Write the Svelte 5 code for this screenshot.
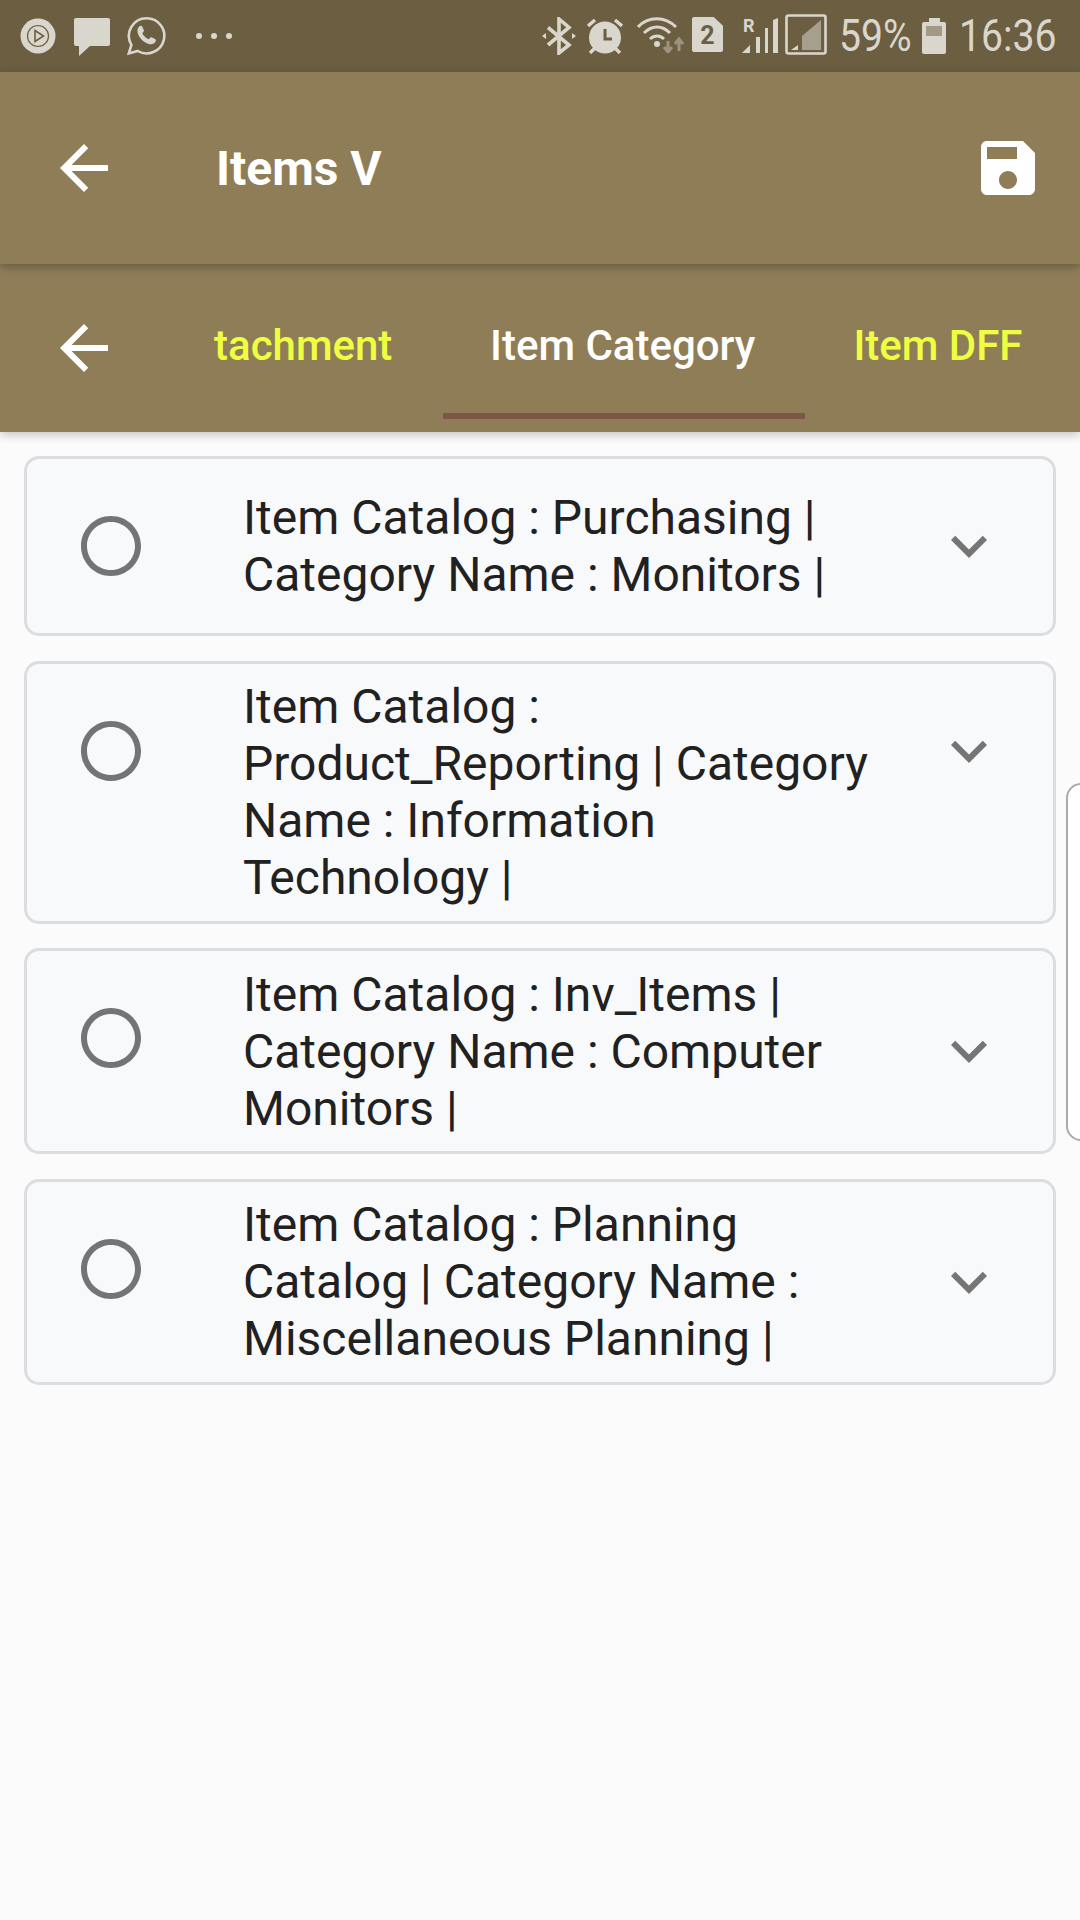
<script>
  const items = [
    { text: 'Item Catalog : Purchasing | Category Name : Monitors |', chevTop: true },
    { text: 'Item Catalog : Product_Reporting | Category Name : Information Technology |', chevTop: true },
    { text: 'Item Catalog : Inv_Items | Category Name : Computer Monitors |', chevTop: false },
    { text: 'Item Catalog : Planning Catalog | Category Name : Miscellaneous Planning |', chevTop: false }
  ];
  const backPath = 'M20 11H7.83l5.59-5.59L12 4l-8 8 8 8 1.41-1.41L7.83 13H20v-2z';
</script>

<div class="page">
  <div class="status">
    <svg class="s-play" viewBox="0 0 36 36" width="36" height="36">
      <circle cx="18" cy="18" r="17.5" fill="#d9d6ce" />
      <circle cx="18" cy="18" r="10.5" fill="none" stroke="#6c5e40" stroke-width="1.2" />
      <path d="M15 12.5 L23.5 18 L15 23.5 Z" fill="#d9d6ce" stroke="#6c5e40" stroke-width="1.6" />
    </svg>
    <svg class="s-chat" viewBox="0 0 36 38" width="36" height="38">
      <path d="M2 0H34a2 2 0 0 1 2 2V26a2 2 0 0 1-2 2H16L5 38V28H2a2 2 0 0 1-2-2V2a2 2 0 0 1 2-2Z" fill="#d9d6ce" />
    </svg>
    <svg class="s-wa" viewBox="0 0 40 40" width="40" height="40">
      <path d="M20.5 2.2A17.6 17.6 0 0 0 5.4 28.8L2.8 37.4l9-2.4A17.6 17.6 0 1 0 20.5 2.2Z" fill="none" stroke="#d9d6ce" stroke-width="2.6" />
      <path d="M13.8 10.2c1 -.6 2 -.4 2.5 .6l1.5 3.2c.3 .7 .1 1.3 -.4 1.9l-1.1 1.3c1.2 2.6 3.6 4.9 6.4 6.1l1.5 -1.5c.5 -.5 1.2 -.6 1.8 -.3l3.1 1.6c.8 .5 1 1.3 .6 2.2c-1 2.3 -3.4 3.5 -6 2.9c-6.1 -1.4 -11 -6.3 -12.2 -12.2c-.4 -2.1 .4 -4.4 1.9 -5.8Z" fill="#d9d6ce" />
    </svg>
    <div class="dots"><i></i><i></i><i></i></div>

    <div class="spacer"></div>

    <svg class="s-bt" viewBox="0 0 34 38" width="34" height="38">
      <path d="M6 10.5 L27 28 L17 36 V2 L27 10.5 L6 28" fill="none" stroke="#d9d6ce" stroke-width="3.6" />
      <path d="M0 19l4-3v6zM34 19l-4-3v6z" fill="#d9d6ce" />
    </svg>
    <svg class="s-alarm" viewBox="0 0 36 36" width="36" height="36">
      <circle cx="18" cy="19.5" r="16" fill="#d9d6ce" />
      <path d="M18 11V21H25" fill="none" stroke="#6c5e40" stroke-width="3" />
      <path d="M1 8 L8 2M35 8 L28 2M3 35 L8 30M33 35 L28 30" stroke="#d9d6ce" stroke-width="3.4" />
    </svg>
    <svg class="s-wifi" viewBox="0 0 49 36" width="49" height="36">
      <path d="M1 10C11 -1 28 -1 39 10M7 16C15 8 25 8 33 16M13 22C17 18 23 18 27 22" fill="none" stroke="#d9d6ce" stroke-width="3" />
      <circle cx="20" cy="27" r="3" fill="#d9d6ce" />
      <path d="M31 24V34M27 30l4 5 4-5M42 34V22M38 27l4-5 4 5" fill="none" stroke="#d9d6ce" stroke-opacity=".45" stroke-width="3" />
    </svg>
    <div class="sim"><span>2</span></div>
    <svg class="s-sig" viewBox="0 0 36 35" width="36" height="35">
      <path d="M0 35L8 27V35ZM14 35V19H18V35ZM23 35V10H26V35ZM31 35V2L36 0V35Z" fill="#d9d6ce" />
    </svg>
    <span class="r">R</span>
    <svg class="s-box" viewBox="0 0 42 41" width="42" height="41">
      <rect x="1.5" y="1.5" width="39" height="38" rx="2" fill="none" stroke="#d9d6ce" stroke-width="2.6" />
      <path d="M17 36V22L36 6V36Z" fill="#d9d6ce" fill-opacity=".55" />
      <path d="M6 36L13 31V36Z" fill="#d9d6ce" />
    </svg>
    <div class="clock pct">59%</div>
    <svg class="s-bat" viewBox="0 0 24 36" width="24" height="36">
      <path d="M7 0H18V4H22a2 2 0 0 1 2 2V34a2 2 0 0 1-2 2H2a2 2 0 0 1-2-2V6a2 2 0 0 1 2-2H7Z" fill="#d9d6ce" />
      <rect x="4" y="8" width="16" height="10" fill="#6c5e40" fill-opacity=".5" />
    </svg>
    <div class="clock time">16:36</div>
  </div>

  <header class="appbar">
    <svg class="icon back" viewBox="0 0 24 24"><path d={backPath} /></svg>
    <h1>Items V</h1>
    <svg class="icon save" viewBox="0 0 24 24">
      <path d="M17 3H5c-1.11 0-2 .9-2 2v14c0 1.1.89 2 2 2h14c1.1 0 2-.9 2-2V7l-4-4zm-5 16c-1.66 0-3-1.34-3-3s1.34-3 3-3 3 1.34 3 3-1.34 3-3 3zm3-10H5V5h10v4z" />
    </svg>
  </header>

  <nav class="tabs">
    <svg class="icon back" viewBox="0 0 24 24"><path d={backPath} /></svg>
    <div class="tab t1">tachment</div>
    <div class="tab active">Item Category</div>
    <div class="tab t3">Item DFF</div>
  </nav>

  <main class="list">
    {#each items as item}
      <section class="card">
        <svg class="radio" viewBox="0 0 24 24">
          <path d="M12 2C6.48 2 2 6.48 2 12s4.48 10 10 10 10-4.48 10-10S17.52 2 12 2zm0 18c-4.42 0-8-3.58-8-8s3.58-8 8-8 8 3.58 8 8-3.58 8-8 8z" />
        </svg>
        <p>{item.text}</p>
        <svg class="chev" class:top={item.chevTop} viewBox="0 0 24 24">
          <path d="M16.59 8.59L12 13.17 7.41 8.59 6 10l6 6 6-6z" />
        </svg>
      </section>
    {/each}
  </main>

  <div class="handle"></div>
</div>

<style>
  :global(body) { margin: 0; background: #fbfbfb; }
  .page {
    position: relative;
    width: 1080px;
    height: 1920px;
    overflow: hidden;
    background: #fbfbfb;
    font-family: Roboto, "Liberation Sans", sans-serif;
  }
  .status {
    position: relative;
    display: flex;
    align-items: flex-start;
    height: 72px;
    box-sizing: border-box;
    padding: 0 24px 0 20px;
    background: #6c5e40;
    color: #d9d6ce;
  }
  .status svg { flex: none; display: block; }
  .s-play { margin-top: 18px; }
  .s-chat { margin: 18px 0 0 18px; }
  .s-wa { margin: 16px 0 0 16px; }
  .dots { display: flex; gap: 9px; margin: 33px 0 0 30px; }
  .dots i { width: 6px; height: 6px; border-radius: 50%; background: #d9d6ce; }
  .spacer { flex: 1; }
  .s-bt { margin-top: 17px; }
  .s-alarm { margin: 18px 0 0 11px; }
  .s-wifi { margin: 17px 0 0 14px; }
  .sim {
    position: relative;
    flex: none;
    width: 31px;
    height: 35px;
    margin: 17px 0 0 6px;
    background: #d9d6ce;
    border-radius: 2px;
    clip-path: polygon(0 0, 70% 0, 100% 25%, 100% 100%, 0 100%);
    color: #6c5e40;
    font-size: 25px;
    font-weight: 700;
    line-height: 37px;
    text-align: center;
  }
  .s-sig { margin: 18px 0 0 19px; }
  .r {
    position: absolute;
    left: 743px;
    top: 17px;
    font-size: 18px;
    font-weight: 700;
    line-height: 18px;
  }
  .s-box { margin: 14px 0 0 7px; }
  .clock {
    flex: none;
    font-size: 45px;
    line-height: 72px;
    transform-origin: left center;
    transform: scaleX(.87);
    white-space: nowrap;
    margin-top: 0;
  }
  .pct { width: 70px; margin-left: 12px; }
  .s-bat { margin: 18px 0 0 13px; }
  .time { width: 97px; margin-left: 13px; }

  .appbar {
    position: relative;
    z-index: 2;
    display: flex;
    align-items: center;
    height: 192px;
    padding: 0 36px 0 48px;
    box-sizing: border-box;
    background: #8f7d58;
    box-shadow: 0 3px 9px rgba(0, 0, 0, .28);
  }
  .icon { width: 72px; height: 72px; flex: none; fill: #fff; display: block; }
  h1 {
    margin: 2px 0 0 96px;
    flex: 1;
    color: #fff;
    font-size: 48px;
    font-weight: 700;
    line-height: 72px;
  }
  .tabs {
    position: relative;
    z-index: 1;
    display: flex;
    align-items: center;
    height: 168px;
    padding: 0 0 0 48px;
    box-sizing: border-box;
    background: #8f7d58;
    box-shadow: 0 3px 9px rgba(0, 0, 0, .22);
  }
  .tab {
    font-size: 42px;
    font-weight: 500;
    line-height: 60px;
    color: #eeff41;
    white-space: nowrap;
    margin-top: -4px;
  }
  .t1 { margin-left: 94px; width: 177px; }
  .active {
    position: relative;
    margin-left: 99px;
    color: #fff;
  }
  .active::after {
    content: '';
    position: absolute;
    left: -47px;
    right: -50px;
    top: 97px;
    height: 6px;
    background: #7b5548;
  }
  .t3 { margin-left: 98px; }

  .list {
    display: flex;
    flex-direction: column;
    gap: 24.5px;
    padding: 24px 24px 0;
  }
  .card {
    display: flex;
    align-items: flex-start;
    box-sizing: border-box;
    min-height: 180px;
    padding: 0;
    background: #f8f9fb;
    border: 3px solid #dcdde0;
    border-radius: 15px;
  }
  .radio {
    flex: none;
    width: 72px;
    height: 72px;
    margin: 51px 0 0 48px;
    fill: #737478;
  }
  p {
    flex: none;
    width: 640px;
    margin: auto 0 auto 96px;
    padding: 14.5px 0;
    color: #212121;
    font-size: 48px;
    line-height: 57px;
  }
  .chev {
    flex: none;
    width: 72px;
    height: 72px;
    margin: auto 0 auto 50px;
    fill: #757575;
  }
  .chev.top { margin-top: 51px; margin-bottom: 0; }

  .handle {
    position: absolute;
    left: 1066px;
    top: 783px;
    width: 30px;
    height: 358px;
    box-sizing: border-box;
    background: #fff;
    border: 2px solid #aaa;
    border-radius: 16px;
  }
</style>
